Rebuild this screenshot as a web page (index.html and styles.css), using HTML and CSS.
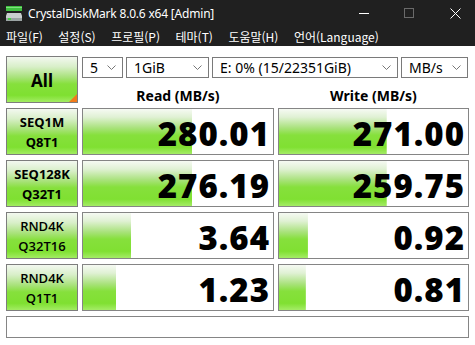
FILE: index.html
```html
<!DOCTYPE html>
<html lang="ko">
<head>
  <meta charset="UTF-8">
  <meta name="viewport" content="width=device-width, initial-scale=1.0">
  <title>CrystalDiskMark 8.0.6 x64 [Admin]</title>
  <link rel="stylesheet" href="styles.css">
</head>
<body>
  <div class="titlebar">
    <svg class="app-icon" width="16" height="16" viewBox="0 0 16 16">
      <rect x="0" y="0" width="16" height="5" fill="#3fbf3f"/>
      <rect x="0" y="1" width="16" height="1" fill="#7fe07f"/>
      <path d="M1 7 H15 L16 10 V15 H0 V10 Z" fill="#c9cfcf"/>
      <rect x="0" y="12" width="16" height="3" fill="#9aa3a3"/>
      <rect x="2" y="12" width="3" height="2" fill="#43d143"/>
    </svg>
    <span class="title">CrystalDiskMark 8.0.6 x64 [Admin]</span>
    <div class="controls">
      <svg width="46" height="27" viewBox="0 0 46 27"><path d="M22 13.5 H32" stroke="#fff" stroke-width="1"/></svg>
      <svg width="46" height="27" viewBox="0 0 46 27"><rect x="21.5" y="8.5" width="9" height="9" fill="none" stroke="#6a6a6a"/></svg>
      <svg width="46" height="27" viewBox="0 0 46 27"><path d="M21.5 8.5 L31.5 18.5 M31.5 8.5 L21.5 18.5" stroke="#fff" stroke-width="1"/></svg>
    </div>
  </div>

  <nav class="menubar">
    <span>파일(F)</span>
    <span>설정(S)</span>
    <span>프로필(P)</span>
    <span>테마(T)</span>
    <span>도움말(H)</span>
    <span>언어(Language)</span>
  </nav>

  <main class="board">
    <div class="all">All</div>

    <div class="settings">
      <div class="selects">
        <div class="select count">5<svg class="chev" width="9" height="5" viewBox="0 0 9 5"><path d="M0.5 0.5 L4.5 4.5 L8.5 0.5" fill="none" stroke="#777"/></svg></div>
        <div class="select size">1GiB<svg class="chev" width="9" height="5" viewBox="0 0 9 5"><path d="M0.5 0.5 L4.5 4.5 L8.5 0.5" fill="none" stroke="#777"/></svg></div>
        <div class="select drive">E: 0% (15/22351GiB)<svg class="chev" width="9" height="5" viewBox="0 0 9 5"><path d="M0.5 0.5 L4.5 4.5 L8.5 0.5" fill="none" stroke="#777"/></svg></div>
        <div class="select unit">MB/s<svg class="chev" width="9" height="5" viewBox="0 0 9 5"><path d="M0.5 0.5 L4.5 4.5 L8.5 0.5" fill="none" stroke="#777"/></svg></div>
      </div>
      <div class="heads">
        <div>Read (MB/s)</div>
        <div>Write (MB/s)</div>
      </div>
    </div>

    <div class="label strong"><span>SEQ1M</span><span>Q8T1</span></div>
    <div class="cell" style="background-size: 57.4% 100%"><span class="val">280.01</span></div>
    <div class="cell" style="background-size: 57% 100%"><span class="val">271.00</span></div>

    <div class="label strong"><span>SEQ128K</span><span>Q32T1</span></div>
    <div class="cell" style="background-size: 57.4% 100%"><span class="val">276.19</span></div>
    <div class="cell" style="background-size: 57% 100%"><span class="val">259.75</span></div>

    <div class="label"><span>RND4K</span><span>Q32T16</span></div>
    <div class="cell" style="background-size: 25.3% 100%"><span class="val">3.64</span></div>
    <div class="cell" style="background-size: 15.3% 100%"><span class="val">0.92</span></div>

    <div class="label"><span>RND4K</span><span>Q1T1</span></div>
    <div class="cell" style="background-size: 17.4% 100%"><span class="val">1.23</span></div>
    <div class="cell" style="background-size: 14.2% 100%"><span class="val">0.81</span></div>

    <div class="comment"></div>
  </main>
</body>
</html>
```

FILE: styles.css
```css
* {
  margin: 0;
  padding: 0;
  box-sizing: border-box;
}
body {
  background: #ffffff;
  font-family: "Noto Sans", "Noto Sans CJK KR", sans-serif;
  color: #000;
}
.titlebar {
  height: 27px;
  display: flex;
  align-items: center;
  background: #202020;
  color: #fff;
}
.app-icon {
  margin: 0 6px 0 6px;
}
.title {
  font-size: 12px;
  letter-spacing: -0.2px;
}
.controls {
  margin-left: auto;
  display: flex;
}
.controls svg {
  display: block;
}
.menubar {
  height: 19px;
  display: flex;
  align-items: center;
  gap: 15.5px;
  padding-left: 6px;
  background: #202020;
  color: #fff;
  font-family: "Noto Sans CJK KR", sans-serif;
  font-size: 12px;
}
.board {
  display: grid;
  grid-template-columns: 72px 192px 191px;
  grid-template-rows: repeat(5, 47px) 22px;
  column-gap: 4px;
  row-gap: 5px;
  padding: 10px 6px 0;
}
.all,
.label {
  border: 1px solid #7d7d7d;
  background: linear-gradient(to bottom, #f3f8f0 0%, #d8efc8 22%, #a8e27a 45%, #86e03c 60%, #7fe031 85%, #a2ec62 100%);
}
.all {
  position: relative;
  display: flex;
  align-items: center;
  justify-content: center;
  font-weight: bold;
  font-size: 17px;
  padding-top: 2px;
}
.all::after {
  content: "";
  position: absolute;
  right: 0;
  bottom: 0;
  border-style: solid;
  border-width: 0 0 8px 8px;
  border-color: transparent transparent #f27a1a transparent;
}
.settings {
  grid-column: 2 / 4;
  display: flex;
  flex-direction: column;
}
.selects {
  display: flex;
  gap: 3px;
  height: 21px;
  margin-top: 1px;
  margin-right: 1px;
}
.select {
  display: flex;
  align-items: center;
  justify-content: space-between;
  border: 1px solid #7a7a7a;
  background: #fff;
  font-size: 14px;
  padding: 0 6px 0 7px;
}
.count { width: 41px; }
.size { width: 83px; }
.drive { flex: 1; }
.unit { width: 67px; }
.heads {
  flex: 1;
  display: grid;
  grid-template-columns: 192px 191px;
  column-gap: 4px;
  align-items: center;
  text-align: center;
  font-weight: bold;
  font-size: 14px;
  padding-top: 8px;
}
.label {
  display: flex;
  flex-direction: column;
  justify-content: center;
  align-items: center;
  font-family: "Open Sans", "Noto Sans", sans-serif;
  font-weight: 600;
  font-size: 13px;
  line-height: 20px;
}
.label.strong {
  font-family: "Noto Sans", sans-serif;
  font-weight: bold;
}
.cell {
  display: flex;
  align-items: center;
  justify-content: flex-end;
  border: 1px solid #858585;
  background-color: #fff;
  background-image: linear-gradient(to bottom, #f6faf3 0%, #e0f1d4 18%, #a9e27c 42%, #86e03c 58%, #80e032 85%, #a4ec66 100%);
  background-repeat: no-repeat;
  padding: 3px 3px 0 0;
}
.val {
  font-family: "Open Sans", "Noto Sans", sans-serif;
  font-weight: 800;
  font-size: 33px;
  letter-spacing: 1px;
  line-height: 1;
}
.comment {
  grid-column: 1 / 4;
  border: 1px solid #858585;
  background: #fff;
}
```
